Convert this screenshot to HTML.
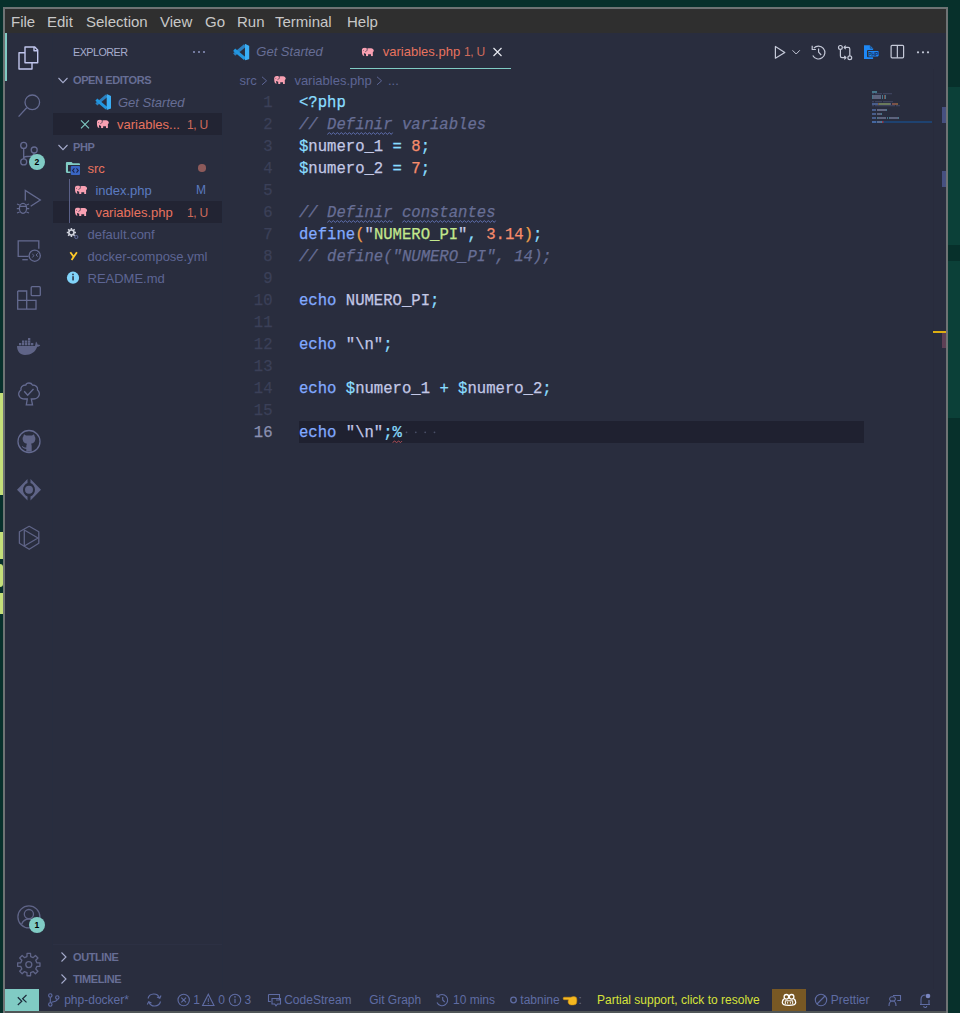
<!DOCTYPE html>
<html><head><meta charset="utf-8">
<style>
*{box-sizing:border-box;margin:0;padding:0}
html,body{width:960px;height:1013px;overflow:hidden;background:#07302b;font-family:"Liberation Sans",sans-serif}
div,span{position:absolute}
.t{white-space:pre;line-height:1}
.code{font-family:"Liberation Mono",monospace;font-size:15.6px;white-space:pre;line-height:22px;-webkit-text-stroke:0.25px currentColor}
svg{position:absolute;left:0;top:0}
</style></head><body>
<!-- left edge yellow marks -->
<div style="left:0;top:393px;width:3px;height:102px;background:#c5e07a"></div>
<div style="left:0;top:532px;width:3px;height:27px;background:#c5e07a"></div>
<div style="left:0;top:564px;width:3px;height:23px;background:#c5e07a;border-radius:0 3px 3px 0"></div>
<div style="left:0;top:593px;width:3px;height:21px;background:#c5e07a"></div>
<div style="left:948px;top:87px;width:12px;height:158px;background:#0b4038"></div>
<div style="left:948px;top:261px;width:12px;height:157px;background:#0b4038"></div>
<!-- window frame -->
<div style="left:3px;top:7px;width:945px;height:1006px;background:#6e7374"></div>
<div style="left:5px;top:1011px;width:941px;height:2px;background:#505657"></div>
<!-- main bg -->
<div style="left:5px;top:9px;width:941px;height:1002px;background:#292d3e"></div>
<!-- menu -->
<div id="menu" style="left:5px;top:9px;width:941px;height:24px;background:#2f2f2f;color:#c8c8c8;font-size:15px">
  <span class="t" style="left:6px;top:5px">File</span>
  <span class="t" style="left:42px;top:5px">Edit</span>
  <span class="t" style="left:81px;top:5px">Selection</span>
  <span class="t" style="left:155px;top:5px">View</span>
  <span class="t" style="left:200px;top:5px">Go</span>
  <span class="t" style="left:232px;top:5px">Run</span>
  <span class="t" style="left:270px;top:5px">Terminal</span>
  <span class="t" style="left:342px;top:5px">Help</span>
</div>
<!-- borders -->
<div style="left:52px;top:33px;width:1px;height:956px;background:#272d3f"></div>
<div style="left:222px;top:33px;width:1px;height:956px;background:#272d3f"></div>
<!-- active indicator -->
<div style="left:5px;top:33px;width:2px;height:48px;background:#80cbc4"></div>

<!-- SIDEBAR -->
<span class="t" style="left:73px;top:47.3px;font-size:10.8px;color:#a6accd;letter-spacing:-0.55px">EXPLORER</span>
<div style="left:193px;top:51px;width:2px;height:2px;background:#737a9f"></div>
<div style="left:198px;top:51px;width:2px;height:2px;background:#737a9f"></div>
<div style="left:203px;top:51px;width:2px;height:2px;background:#737a9f"></div>
<span class="t" style="left:73px;top:75px;font-size:11px;font-weight:bold;color:#676e95;letter-spacing:-0.4px">OPEN EDITORS</span>
<span class="t" style="left:118px;top:95.5px;font-size:13px;font-style:italic;color:#676e95">Get Started</span>
<div style="left:53px;top:113px;width:169px;height:22px;background:#222433"></div>
<span class="t" style="left:117px;top:117.8px;font-size:13px;color:#e8735f">variables...</span>
<span class="t" style="left:187px;top:117.8px;font-size:13px;color:#cf6b5c;font-size:12px;letter-spacing:-0.3px;margin-top:0.85px">1, U</span>
<span class="t" style="left:73px;top:142px;font-size:11px;font-weight:bold;color:#676e95;letter-spacing:-0.4px">PHP</span>
<span class="t" style="left:87.5px;top:162px;font-size:13px;color:#e8735f">src</span>
<div style="left:198.2px;top:164px;width:7.5px;height:7.5px;border-radius:50%;background:#8d5a5a"></div>
<div style="left:69px;top:179px;width:1px;height:44px;background:#5a6088"></div>
<span class="t" style="left:95.4px;top:184px;font-size:13px;color:#5b7bc0">index.php</span>
<span class="t" style="left:196px;top:184px;font-size:12px;color:#5b7bc0">M</span>
<div style="left:53px;top:201px;width:169px;height:22px;background:#222433"></div>
<div style="left:69px;top:201px;width:1px;height:22px;background:#5a6088"></div>
<span class="t" style="left:95.4px;top:206px;font-size:13px;color:#e8735f">variables.php</span>
<span class="t" style="left:187px;top:206px;font-size:13px;color:#cf6b5c;font-size:12px;letter-spacing:-0.3px;margin-top:0.85px">1, U</span>
<span class="t" style="left:87.5px;top:228px;font-size:13px;color:#5d6594">default.conf</span>
<span class="t" style="left:87.5px;top:250px;font-size:13px;color:#5d6594">docker-compose.yml</span>
<span class="t" style="left:87.5px;top:272px;font-size:13px;color:#5d6594">README.md</span>
<div style="left:53px;top:944px;width:169px;height:1px;background:#2c3043"></div>
<span class="t" style="left:73px;top:952px;font-size:11px;font-weight:bold;color:#676e95;letter-spacing:-0.4px">OUTLINE</span>
<span class="t" style="left:73px;top:974px;font-size:11px;font-weight:bold;color:#676e95;letter-spacing:-0.4px">TIMELINE</span>

<!-- EDITOR -->
<span class="t" style="left:256.3px;top:45px;font-size:13px;font-style:italic;color:#676e95">Get Started</span>
<span class="t" style="left:382.8px;top:44.7px;font-size:13px;color:#e8735f">variables.php</span>
<span class="t" style="left:464px;top:45.5px;font-size:12px;color:#cf6b5c;letter-spacing:-0.3px">1, U</span>
<div style="left:350px;top:67.5px;width:161px;height:1.5px;background:#80cbc4"></div>
<span class="t" style="left:239.4px;top:73.7px;font-size:13px;color:#5d6594">src</span>
<span class="t" style="left:294.4px;top:73.7px;font-size:13px;color:#5d6594">variables.php</span>
<span class="t" style="left:388px;top:73.7px;font-size:13px;color:#5d6594">...</span>
<!-- current line -->
<div style="left:299px;top:421px;width:565px;height:22px;background:#1f2130"></div>
<!-- line numbers -->
<div class="code" style="left:230px;top:92px;width:42.5px;text-align:right;color:#3b4058">1
2
3
4
5
6
7
8
9
10
11
12
13
14
15
<span style="position:static;color:#8a90b0">16</span></div>
<div class="code" style="left:299px;top:92px;width:560px;color:#c3c8e6"><span style="position:static;color:#89ddff">&lt;?php</span>
<i style="color:#676e95">// Definir variables</i>
<b style="font-weight:normal;color:#89ddff">$</b>numero_1 <b style="font-weight:normal;color:#89ddff">=</b> <b style="font-weight:normal;color:#f78c6c">8</b><b style="font-weight:normal;color:#89ddff">;</b>
<b style="font-weight:normal;color:#89ddff">$</b>numero_2 <b style="font-weight:normal;color:#89ddff">=</b> <b style="font-weight:normal;color:#f78c6c">7</b><b style="font-weight:normal;color:#89ddff">;</b>

<i style="color:#676e95">// Definir constantes</i>
<b style="font-weight:normal;color:#82aaff">define</b><b style="font-weight:normal;color:#f0a04b">(</b>"<b style="font-weight:normal;color:#c3e88d">NUMERO_PI</b>"<b style="font-weight:normal;color:#89ddff">,</b> <b style="font-weight:normal;color:#f78c6c">3.14</b><b style="font-weight:normal;color:#f0a04b">)</b><b style="font-weight:normal;color:#89ddff">;</b>
<i style="color:#676e95">// define("NUMERO_PI", 14);</i>

<b style="font-weight:normal;color:#82aaff">echo</b> NUMERO_PI<b style="font-weight:normal;color:#89ddff">;</b>

<b style="font-weight:normal;color:#82aaff">echo</b> "\n"<b style="font-weight:normal;color:#89ddff">;</b>

<b style="font-weight:normal;color:#82aaff">echo</b> <b style="font-weight:normal;color:#89ddff">$</b>numero_1 <b style="font-weight:normal;color:#89ddff">+</b> <b style="font-weight:normal;color:#89ddff">$</b>numero_2<b style="font-weight:normal;color:#89ddff">;</b>

<b style="font-weight:normal;color:#82aaff">echo</b> "\n"<b style="font-weight:normal;color:#89ddff">;%</b></div>

<!-- minimap -->
<div style="left:933px;top:69px;width:1px;height:920px;background:#282b3c"></div>
<div style="left:872px;top:121px;width:60px;height:2px;background:#1e4270"></div>
<div style="left:942px;top:107px;width:4px;height:16px;background:#465080"></div>
<div style="left:942px;top:171px;width:4px;height:16px;background:#465080"></div>
<div style="left:933px;top:331px;width:13px;height:2px;background:#dcae12"></div>
<div style="left:942px;top:333px;width:4px;height:15px;background:#5d4055"></div>
<svg width="960" height="1013" viewBox="0 0 960 1013">
 <g opacity="0.6">
 <!-- line1 <?php -->
 <rect x="872" y="91" width="5" height="2" fill="#5ba9bf"/>
 <rect x="872" y="93" width="2" height="1.3" fill="#4b5070"/><rect x="875" y="93" width="7" height="1.3" fill="#4b5070"/><rect x="883" y="93" width="9" height="1.3" fill="#4b5070"/>
 <rect x="872" y="95" width="1" height="2" fill="#5ba9bf"/><rect x="873" y="95" width="8" height="2" fill="#8088a8"/><rect x="882" y="95" width="1" height="2" fill="#5ba9bf"/><rect x="884" y="95" width="1" height="2" fill="#b36a55"/><rect x="885" y="95" width="1" height="2" fill="#5ba9bf"/>
 <rect x="872" y="97" width="1" height="2" fill="#5ba9bf"/><rect x="873" y="97" width="8" height="2" fill="#8088a8"/><rect x="882" y="97" width="1" height="2" fill="#5ba9bf"/><rect x="884" y="97" width="1" height="2" fill="#b36a55"/><rect x="885" y="97" width="1" height="2" fill="#5ba9bf"/>
 <rect x="872" y="101" width="2" height="1.3" fill="#4b5070"/><rect x="875" y="101" width="7" height="1.3" fill="#4b5070"/><rect x="883" y="101" width="10" height="1.3" fill="#4b5070"/>
 <rect x="872" y="103" width="6" height="2" fill="#5f80c0"/><rect x="878" y="103" width="1" height="2" fill="#b37b40"/><rect x="879" y="103" width="11" height="2" fill="#98b070"/><rect x="890" y="103" width="1" height="2" fill="#8088a8"/><rect x="892" y="103" width="4" height="2" fill="#b36a55"/><rect x="896" y="103" width="2" height="2" fill="#b37b40"/>
 <rect x="872" y="105" width="2" height="1.3" fill="#4b5070"/><rect x="875" y="105" width="20" height="1.3" fill="#4b5070"/><rect x="896" y="105" width="4" height="1.3" fill="#4b5070"/>
 <rect x="872" y="109" width="4" height="2" fill="#5f80c0"/><rect x="877" y="109" width="9" height="2" fill="#8a90b0"/><rect x="886" y="109" width="1" height="2" fill="#5ba9bf"/>
 <rect x="872" y="113" width="4" height="2" fill="#5f80c0"/><rect x="877" y="113" width="4" height="2" fill="#8088a8"/><rect x="881" y="113" width="1" height="2" fill="#5ba9bf"/>
 <rect x="872" y="117" width="4" height="2" fill="#5f80c0"/><rect x="877" y="117" width="1" height="2" fill="#5ba9bf"/><rect x="878" y="117" width="8" height="2" fill="#8088a8"/><rect x="887" y="117" width="1" height="2" fill="#5ba9bf"/><rect x="889" y="117" width="1" height="2" fill="#5ba9bf"/><rect x="890" y="117" width="8" height="2" fill="#8088a8"/><rect x="898" y="117" width="1" height="2" fill="#5ba9bf"/>
 <rect x="872" y="121" width="4" height="2" fill="#5f80c0"/><rect x="877" y="121" width="4" height="2" fill="#8088a8"/><rect x="881" y="121" width="1" height="2" fill="#5ba9bf"/><rect x="882" y="121" width="1.5" height="2" fill="#e03030"/>
 </g>
</svg>
<!-- editor actions -->
<svg width="960" height="1013" viewBox="0 0 960 1013">
 <g fill="none" stroke="#c5c9d8" stroke-width="1.2" stroke-linejoin="round">
  <path d="M775.4 46.5 V58.2 L784.8 52.4 Z"/>
  <path d="M792.5 50.3 L796.2 54 L799.8 50.3" stroke-width="1"/>
  <path d="M813.8 48.2 A6.4 6.4 0 1 1 812.8 55.5"/>
  <path d="M812.2 45.8 V49.5 H815.9"/>
  <path d="M818.6 48.6 V52.2 L821.2 55"/>
  <circle cx="840.4" cy="47.4" r="1.9"/>
  <circle cx="849.8" cy="57.7" r="1.9"/>
  <path d="M840.4 49.3 V56 C840.4 57.3 841 57.7 842 57.7 H846"/>
  <path d="M844.3 56 L846 57.7 L844.3 59.4"/>
  <path d="M849.8 55.8 V49 C849.8 47.7 849.2 47.4 848.2 47.4 H844"/>
  <path d="M845.7 45.7 L844 47.4 L845.7 49.1"/>
  <rect x="891.1" y="45.3" width="12.5" height="12.5" rx="1"/>
  <path d="M897.35 45.3 V57.8"/>
 </g>
 <g fill="#c5c9d8"><circle cx="918" cy="52.3" r="1.1"/><circle cx="923" cy="52.3" r="1.1"/><circle cx="928" cy="52.3" r="1.1"/></g>
 <path d="M864 45.2 H869.9 L873.1 48.5 V59 H864 Z" fill="#1e88f5"/>
 <path d="M870.3 45.6 V48.2 H872.9" fill="none" stroke="#292d3e" stroke-width="0.6"/>
 <rect x="867" y="50" width="12.6" height="7.3" rx="1" fill="#292d3e"/>
 <rect x="868" y="50.9" width="10.6" height="5.5" rx="0.8" fill="#1e88f5"/>
 <text x="873.3" y="55.6" font-family="Liberation Sans" font-weight="bold" font-size="5" text-anchor="middle" fill="#183060">PHP</text>
</svg>

<!-- status bar -->

<div style="left:5px;top:989px;width:34px;height:22px;background:#80cbc4"></div>
<div style="left:772px;top:989px;width:34px;height:22px;background:#785824"></div>
<span class="t" style="left:64.2px;top:994px;font-size:12px;color:#5f6ca3">php-docker*</span>
<span class="t" style="left:193.3px;top:994px;font-size:12px;color:#5f6ca3">1</span>
<span class="t" style="left:218.3px;top:994px;font-size:12px;color:#5f6ca3">0</span>
<span class="t" style="left:244.5px;top:994px;font-size:12px;color:#5f6ca3">3</span>
<span class="t" style="left:284.2px;top:994px;font-size:12px;color:#5f6ca3">CodeStream</span>
<span class="t" style="left:369.2px;top:994px;font-size:12px;color:#5f6ca3">Git Graph</span>
<span class="t" style="left:453px;top:994px;font-size:12px;color:#5f6ca3">10 mins</span>
<span class="t" style="left:520.3px;top:994px;font-size:12px;color:#5f6ca3">tabnine</span>
<span class="t" style="left:578.5px;top:994px;font-size:12px;color:#5f6ca3">:</span>
<span class="t" style="left:597px;top:994px;font-size:12px;color:#d6e23a">Partial support, click to resolve</span>
<span class="t" style="left:830.8px;top:994px;font-size:12px;color:#5f6ca3">Prettier</span>
<svg width="960" height="1013" viewBox="0 0 960 1013">
 <path d="M17.8 997.3 L21.8 1001.2 L17.8 1005 M26.5 995 L22.6 998.7 L26.5 1002.4" fill="none" stroke="#1b2b3b" stroke-width="1.2"/>
 <g fill="none" stroke="#5f6ca3" stroke-width="1.1">
  <circle cx="50.3" cy="995.5" r="1.7"/><circle cx="50.3" cy="1004.5" r="1.7"/><circle cx="57.3" cy="997.5" r="1.7"/>
  <path d="M50.3 997.2 V1002.8 M57.3 999.2 C57.3 1001.5 54 1001.5 51.5 1002.5"/>
  <path d="M148 998.5 A6 6 0 0 1 159.5 998 M160.5 1001.5 A6 6 0 0 1 149 1002"/>
  <path d="M157 997 L159.8 998.3 L161 995.5 M151.5 1003 L148.7 1001.7 L147.3 1004.5"/>
  <circle cx="183.7" cy="1000" r="5.7"/>
  <path d="M181.3 997.6 L186.1 1002.4 M186.1 997.6 L181.3 1002.4"/>
  <path d="M208.3 994.3 L214 1005.5 H202.6 Z"/>
  <path d="M208.3 998.3 V1002" stroke-width="1"/>
  <circle cx="235" cy="1000" r="5.7"/>
  <path d="M235 998.8 V1003" stroke-width="1.2"/>
  <path d="M268.5 994.5 H279.5 V1000 H276 M268.5 994.5 V1001.5 H270.8"/>
  <path d="M272 998.5 H280.5 V1004 H277.5 L276 1005.8 L274.7 1004 H272 Z"/>
  <path d="M437.8 996.5 A5.6 5.6 0 1 1 437 1002.5 M437 994 V997 H440 M442.7 997 V1000 L444.7 1002"/>
  <circle cx="513.5" cy="1000" r="2.8" stroke-width="1.3"/>
  <circle cx="821" cy="1000" r="5.7"/>
  <path d="M817 1004 L825 996"/>
  <path d="M893 995.5 H900.5 V1000.5 H897.3 M889 1006 C889 1002.5 890.5 1001 892.5 1001 C894.5 1001 896 1002.5 896 1006 M892.5 1001 A2.2 2.2 0 1 0 892.5 996.8 A2.2 2.2 0 1 0 892.5 1001"/>
  <path d="M920 1004.5 H930 M921 1004.5 V999.5 C921 996.5 923 995 925.5 995 M929 1000 V1004.5 M923.7 1006 A1.5 1.5 0 0 0 926.7 1006"/>
 </g>
 <circle cx="913.5" cy="996.5" r="0" fill="#5f6ca3"/>
 <circle cx="928" cy="996" r="2.3" fill="#7a86c0"/>
 <circle cx="183.7" cy="998.8" r="0" fill="#5f6ca3"/>
 <circle cx="235" cy="996.9" r="0.8" fill="#5f6ca3"/>
 <circle cx="208.3" cy="1003.6" r="0.6" fill="#5f6ca3"/>
 <!-- hand emoji -->
 <path d="M563.8 997.2 H570.8 C572.8 996.4 575 996.4 576.3 997.4 C577.1 998.4 577.1 1003 576.1 1004 C575 1005 572.2 1005.2 570.2 1004.8 C568.7 1004.5 567.9 1003 568.1 1001.5 L568.4 999.7 H564 C563 999.7 562.8 997.6 563.8 997.2 Z" fill="#f5b820" stroke="#c98a10" stroke-width="0.5"/>
 <!-- copilot-ish -->
 <g fill="none" stroke="#ffffff" stroke-width="1.3">
  <circle cx="786.4" cy="996.8" r="2.3"/><circle cx="791.6" cy="996.8" r="2.3"/>
  <path d="M784.2 998.9 C782.8 999.6 782.3 1001 782.3 1002.5 C782.3 1004.6 785.3 1005.4 789 1005.4 C792.7 1005.4 795.7 1004.6 795.7 1002.5 C795.7 1001 795.2 999.6 793.8 998.9"/>
  <path d="M785.3 1000.8 H792.7 V1004" stroke-width="1"/><path d="M785.3 1000.8 V1004" stroke-width="1"/>
  <path d="M787.6 1001.8 V1003.6 M790.4 1001.8 V1003.6" stroke-width="0.9"/>
 </g>
</svg>

<svg width="960" height="1013" viewBox="0 0 960 1013">
 <!-- explorer (active) -->
 <g fill="none" stroke="#c0c5ec" stroke-width="1.4" stroke-linejoin="round">
  <path d="M25 47 H34.8 L37.7 50 V62.7 H25 Z"/>
  <path d="M34 47 V50.8 H37.7"/>
  <path d="M25 52.8 H19 V69 H32 V62.7"/>
 </g>
 <g fill="none" stroke="#646a90" stroke-width="1.3">
  <!-- search -->
  <circle cx="32.3" cy="102.3" r="7.3"/>
  <path d="M26.7 107.8 L18.6 116.6"/>
  <!-- scm -->
  <circle cx="23.7" cy="145.4" r="3"/>
  <circle cx="34.2" cy="150" r="3"/>
  <circle cx="23.7" cy="161.9" r="3"/>
  <path d="M23.7 148.4 V158.9"/>
  <path d="M34.2 153 C34.2 156 31 156.5 27 156.5 C25 156.5 23.7 157 23.7 158"/>
  <!-- debug -->
  <path d="M25.3 200.5 V190.5 L40.3 200 L30.7 206.3"/>
  <ellipse cx="23" cy="208.3" rx="3.6" ry="5"/>
  <path d="M19.4 206.3 H26.6 M17 204 L19.6 205 M29 204 L26.4 205 M16.8 208.7 H19.4 M26.6 208.7 H29.2 M17 213 L19.6 212 M29 213 L26.4 212"/>
  <!-- remote explorer -->
  <path d="M28.5 256.3 H18.2 V240.8 H38.8 V248.7"/>
  <path d="M22.3 259.7 H27.8"/>
  <circle cx="34.7" cy="255.7" r="5.6"/>
  <path d="M32.3 254 L34 255.6 L32.3 257.5 M37.8 253.3 L36 255 L37.8 256.6" stroke-width="1"/>
  <!-- extensions -->
  <path d="M17.7 291 H26.7 V309.2 M17.7 300.3 H36 V309.2 H17.7 Z M17.7 291 V309.2"/>
  <rect x="31.2" y="286.7" width="9.1" height="9" rx="1"/>
  <!-- tree check -->
  <path d="M29 383 C27 383 26 384 25.8 385 C22 385 20.5 387.5 21 390 C18.5 391.5 18 394.5 19.5 396.5 C20.5 398.5 23 399 25 399 H27.3 L26.3 404.8 H32.5 L31.3 399 H33 C35 399 37.3 398.5 38.5 396.5 C40 394.5 39.5 391.5 37.5 390 C38 387.5 36 385 32.5 385 C32 384 31 383 29 383 Z"/>
  <path d="M24.2 391.3 L27.7 395.3 L33.5 389"/>
  <!-- github -->
  <circle cx="29" cy="441.5" r="11"/>
 </g>
 <g fill="#5f6487">
  <!-- docker -->
  <path d="M17 346 H35 C35.5 344.5 35.5 343 36 341.5 C37 342.5 37.5 343.5 37.5 344.5 C38.5 344.5 39.5 344.8 40.3 345 C39.5 346.5 38 346.8 37.2 346.8 C35.5 352 31 355 25 355 C20 355 17 351 17 346 Z"/>
  <rect x="19" y="343" width="2.3" height="2.3"/>
  <rect x="22" y="340.5" width="2.3" height="2.3"/><rect x="22" y="343" width="2.3" height="2.3"/>
  <rect x="25" y="340.5" width="2.3" height="2.3"/><rect x="25" y="343" width="2.3" height="2.3"/>
  <rect x="28" y="338" width="2.3" height="2.3"/><rect x="28" y="340.5" width="2.3" height="2.3"/><rect x="28" y="343" width="2.3" height="2.3"/>
  <rect x="31" y="343" width="2.3" height="2.3"/>
  <!-- github cat -->
  <path d="M23.3 436.5 L24 434.3 L26 435.5 H32 L34 434.3 L34.7 436.5 C35.5 437.5 35.5 439 35.2 440 C34.8 442 33.5 443.5 31 443.8 C31.5 444.3 31.7 445 31.7 446 V451.5 H26.3 V449 C24.5 449 22.8 448 21.8 446.3 L22.5 446 C23.5 447.2 24.5 447.5 26.3 447.5 C26.3 446 26.5 444.5 27 443.8 C24.5 443.5 23.2 442 22.8 440 C22.5 439 22.5 437.5 23.3 436.5 Z"/>
  <!-- gitlens -->
  <path d="M27.5 479 L17 489.8 L27.5 500.6 V496.5 C24.8 495.5 23 492.8 23 489.8 C23 486.8 24.8 484.2 27.5 483.1 Z"/>
  <path d="M30.5 479 L41 489.8 L30.5 500.6 V496.5 C33.2 495.5 35 492.8 35 489.8 C35 486.8 33.2 484.2 30.5 483.1 Z"/>
  <circle cx="29" cy="489.8" r="4"/>
 </g>
 <g fill="none" stroke="#5f6487" stroke-width="1.3" stroke-linejoin="round">
  <!-- hexagon play -->
  <path d="M29.2 526.3 L38.8 531.8 V543.2 L29.2 549.3 L19.4 543.2 V531.8 Z"/>
  <path d="M24.3 530 V546 L38 538 Z"/>
  <!-- account -->
  <circle cx="28.9" cy="916.9" r="11"/>
  <circle cx="28.9" cy="914.1" r="4.6"/>
  <path d="M21.5 924.5 C23 920.5 26 919 29 919 C32 919 35 920.5 36.5 924.5"/>
 </g>
 <!-- gear -->
 <g fill="none" stroke="#5f6487" stroke-width="1.3" stroke-linejoin="round">
  <path d="M26.96 956.61 L27.03 953.44 L30.57 953.44 L30.64 956.61 L33.15 957.65 L35.44 955.46 L37.94 957.96 L35.75 960.25 L36.79 962.76 L39.96 962.83 L39.96 966.37 L36.79 966.44 L35.75 968.95 L37.94 971.24 L35.44 973.74 L33.15 971.55 L30.64 972.59 L30.57 975.76 L27.03 975.76 L26.96 972.59 L24.45 971.55 L22.16 973.74 L19.66 971.24 L21.85 968.95 L20.81 966.44 L17.64 966.37 L17.64 962.83 L20.81 962.76 L21.85 960.25 L19.66 957.96 L22.16 955.46 L24.45 957.65 Z"/>
  <circle cx="28.8" cy="964.6" r="3"/>
 </g>
 <defs>
  <symbol id="vsc" viewBox="0 0 16 16">
   <path d="M11.7 1.6 L1.3 10.3" stroke="#2a80c0" stroke-width="3"/>
   <path d="M1.3 5.7 L11.7 14.4" stroke="#2196e0" stroke-width="3"/>
   <path fill="#3aaef5" d="M11.7 0 L16 2 V14.5 L11.7 16 Z"/>
  </symbol>
  <symbol id="el" viewBox="0 0 12.2 8.8">
   <path fill="#f8a0b2" d="M2.6 0.2 C4 0.2 5 0.6 5.3 1.3 L5.7 0.8 C7 0.6 9.5 0.6 10.5 0.9 C11.6 1.3 12.2 2.3 12.2 3.5 L11.2 4.6 V8.7 H9.3 V6.8 H6.4 V8.7 H4.3 V6.3 C3.6 6.3 3.1 6.1 2.8 5.6 L2.2 5.5 V7.2 L2.8 8.2 H1.5 C0.8 7.6 0.3 6.6 0.2 5.2 L0 3.3 C0 1.4 1.1 0.2 2.6 0.2 Z"/>
   <path d="M5.4 1.1 C5.7 2.4 5.3 3.6 3.6 4.1" fill="none" stroke="#292d3e" stroke-width="0.7"/>
   <circle cx="1.8" cy="2.8" r="0.45" fill="#292d3e"/>
  </symbol>
 </defs>
 <!-- sidebar chevrons -->
 <g fill="none" stroke="#a6accd" stroke-width="1.1">
  <path d="M58.5 78 L63 82.6 L67.5 78"/>
  <path d="M58.5 145 L63 149.6 L67.5 145"/>
  <path d="M61.5 952.5 L66 957 L61.5 961.5"/>
  <path d="M61.5 974.5 L66 979 L61.5 983.5"/>
 </g>
 <!-- vscode logo -->
 <g>
  <use href="#vsc" x="95" y="94" width="16" height="16"/>
 </g>
 <!-- close x -->
 <path d="M81 120.3 L89 128.3 M89 120.3 L81 128.3" stroke="#80cbc4" stroke-width="1.1"/>
 <use href="#el" x="96.7" y="119.6" width="12.3" height="8.7"/>
 <use href="#el" x="74.9" y="185.4" width="12.2" height="8.8"/>
 <use href="#el" x="74.9" y="207.4" width="12.2" height="8.8"/>
 <!-- folder src -->
 <path d="M65.9 163 Q65.9 161.9 67 161.9 H71.6 L72.8 163.2 H79 Q80 163.2 80 164.2 V164.9 H68 V171.5 H70.5 V172.9 H67 Q65.9 172.9 65.9 171.8 Z" fill="#80cbc4"/>
 <rect x="70.8" y="165.9" width="9.2" height="9.1" rx="1" fill="#3a66c4"/>
 <path d="M74.4 168.3 L72.6 170.45 L74.4 172.6 M76.5 168.3 L78.3 170.45 L76.5 172.6" fill="none" stroke="#1b2448" stroke-width="1.1"/>
 <!-- gear file -->
 <g transform="translate(71.4 232.5)">
  <circle r="3.3" fill="#d0d2dc"/>
  <path d="M-0.75 -4.6 H0.75 V4.6 H-0.75 Z M-4.6 -0.75 V0.75 H4.6 V-0.75 Z" fill="#d0d2dc"/>
  <path d="M-0.75 -4.6 H0.75 V4.6 H-0.75 Z M-4.6 -0.75 V0.75 H4.6 V-0.75 Z" fill="#d0d2dc" transform="rotate(45)"/>
  <circle r="1.7" fill="#292d3e"/>
 </g>
 <circle cx="76.3" cy="237" r="1.6" fill="none" stroke="#6b76a8" stroke-width="0.9"/>
 <!-- yaml y -->
 <path d="M70.3 252.2 L73.6 256.6 M76.9 252.2 L71.6 259.9" fill="none" stroke="#ffca28" stroke-width="1.8"/>
 <!-- info -->
 <circle cx="73" cy="277.7" r="6.1" fill="#81d4fa"/>
 <rect x="72.3" y="276.2" width="1.5" height="4.2" fill="#292d3e"/>
 <circle cx="73" cy="274.4" r="0.85" fill="#292d3e"/>
 <!-- tab icons -->
 <g transform="translate(232.8 43.8) scale(1.04)">
  <use href="#vsc" x="0" y="0" width="16" height="16"/>
 </g>
 <use href="#el" x="361.6" y="47.6" width="12.4" height="8.7"/>
 <path d="M493.5 48 L501.5 56 M501.5 48 L493.5 56" stroke="#e6e8f0" stroke-width="1.2"/>
 <use href="#el" x="273.7" y="75.7" width="12.5" height="8.4"/>
 <g fill="none" stroke="#5d6594" stroke-width="1">
  <path d="M262 76.8 L266.6 80.8 L262 84.8"/>
  <path d="M377 76.8 L381.6 80.8 L377 84.8"/>
 </g>
 <!-- squiggles -->
 <g fill="none" stroke="#6070b0" stroke-width="1">
  <path d="M327.3 134.4 L329.3 132.6 L331.3 134.4 L333.3 132.6 L335.3 134.4 L337.3 132.6 L339.3 134.4 L341.3 132.6 L343.3 134.4 L345.3 132.6 L347.3 134.4 L349.3 132.6 L351.3 134.4 L353.3 132.6 L355.3 134.4 L357.3 132.6 L359.3 134.4 L361.3 132.6 L363.3 134.4 L365.3 132.6 L367.3 134.4 L369.3 132.6 L371.3 134.4 L373.3 132.6 L375.3 134.4 L377.3 132.6 L379.3 134.4 L381.3 132.6 L383.3 134.4 L385.3 132.6 L387.3 134.4 L389.3 132.6 L391.3 134.4 L392.6 132.6 M327.3 222.4 L329.3 220.6 L331.3 222.4 L333.3 220.6 L335.3 222.4 L337.3 220.6 L339.3 222.4 L341.3 220.6 L343.3 222.4 L345.3 220.6 L347.3 222.4 L349.3 220.6 L351.3 222.4 L353.3 220.6 L355.3 222.4 L357.3 220.6 L359.3 222.4 L361.3 220.6 L363.3 222.4 L365.3 220.6 L367.3 222.4 L369.3 220.6 L371.3 222.4 L373.3 220.6 L375.3 222.4 L377.3 220.6 L379.3 222.4 L381.3 220.6 L383.3 222.4 L385.3 220.6 L387.3 222.4 L389.3 220.6 L391.3 222.4 L392.6 220.6 M402.3 222.4 L404.3 220.6 L406.3 222.4 L408.3 220.6 L410.3 222.4 L412.3 220.6 L414.3 222.4 L416.3 220.6 L418.3 222.4 L420.3 220.6 L422.3 222.4 L424.3 220.6 L426.3 222.4 L428.3 220.6 L430.3 222.4 L432.3 220.6 L434.3 222.4 L436.3 220.6 L438.3 222.4 L440.3 220.6 L442.3 222.4 L444.3 220.6 L446.3 222.4 L448.3 220.6 L450.3 222.4 L452.3 220.6 L454.3 222.4 L456.3 220.6 L458.3 222.4 L460.3 220.6 L462.3 222.4 L464.3 220.6 L466.3 222.4 L468.3 220.6 L470.3 222.4 L472.3 220.6 L474.3 222.4 L476.3 220.6 L478.3 222.4 L480.3 220.6 L482.3 222.4 L484.3 220.6 L486.3 222.4 L488.3 220.6 L490.3 222.4 L492.3 220.6 L494.3 222.4 L495.6 220.6"/>
 </g>
 <path d="M392.6 442.5 L394.6 441.1 L396.6 442.5 L398.6 441.1 L400.6 442.5 L402.0 441.1" fill="none" stroke="#c2545a" stroke-width="0.9"/>
 <g fill="#4a4f68">
  <circle cx="406.5" cy="432.3" r="0.9"/><circle cx="415.8" cy="432.3" r="0.9"/><circle cx="425.2" cy="432.3" r="0.9"/><circle cx="434.5" cy="432.3" r="0.9"/>
 </g>
 <!-- badges -->
 <circle cx="37" cy="162" r="8" fill="#80cbc4"/>
 <text x="36.9" y="164.9" font-family="Liberation Sans" font-weight="bold" font-size="8.6" text-anchor="middle" fill="#000">2</text>
 <circle cx="37" cy="925" r="8" fill="#80cbc4"/>
 <text x="36.9" y="927.8" font-family="Liberation Sans" font-weight="bold" font-size="8.6" text-anchor="middle" fill="#000">1</text>
</svg>
</body></html>
